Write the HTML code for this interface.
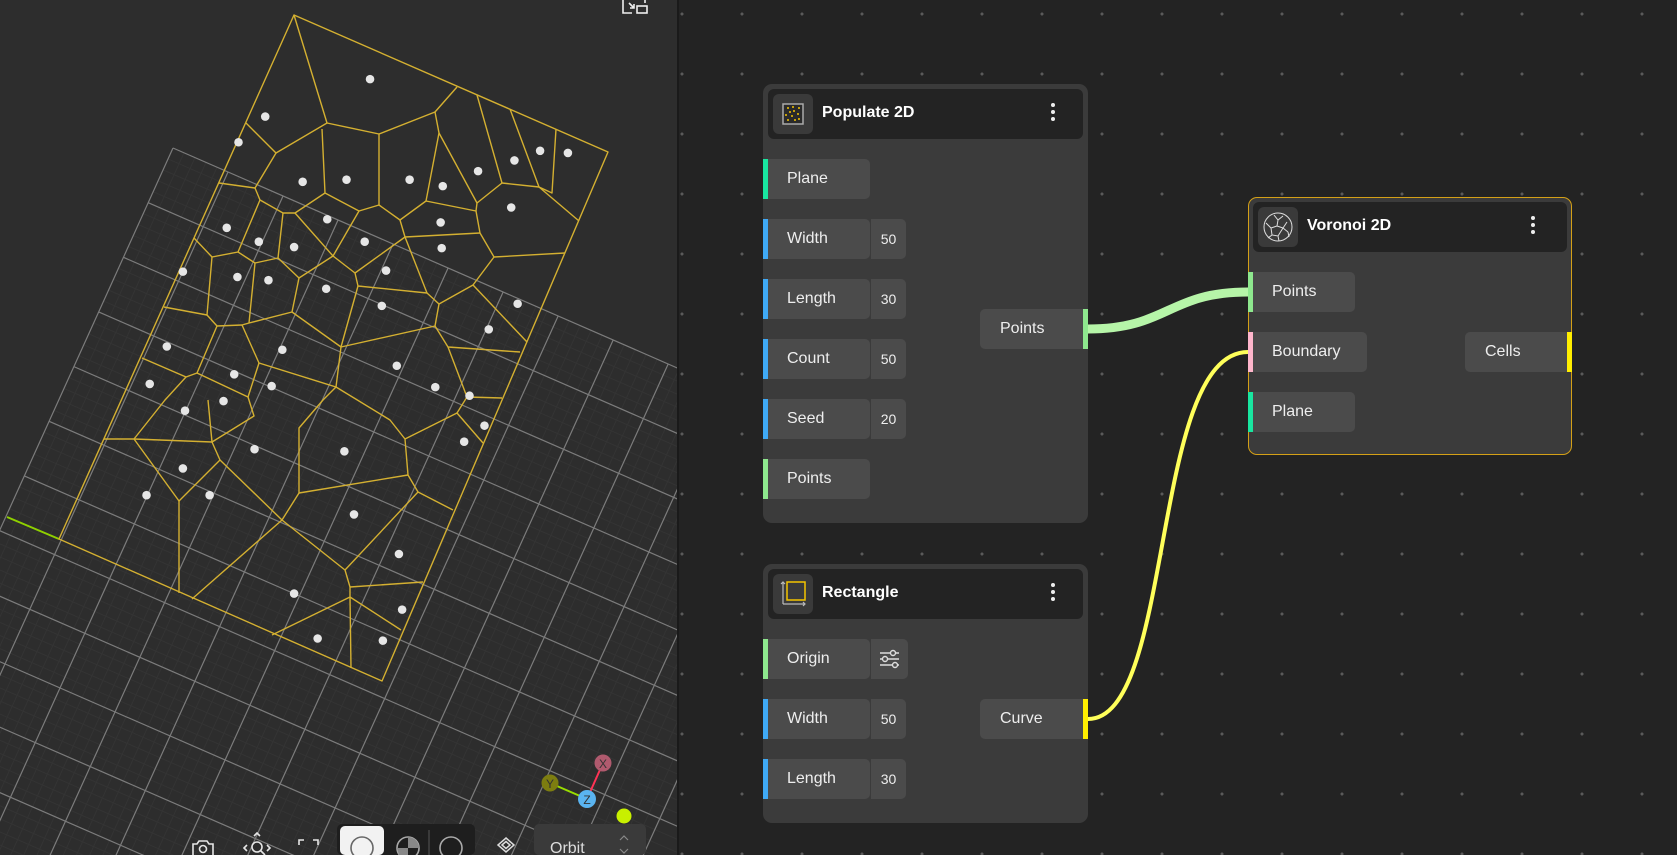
<!DOCTYPE html>
<html><head><meta charset="utf-8"><style>
*{margin:0;padding:0;box-sizing:border-box}
body{width:1677px;height:855px;overflow:hidden;background:#222;font-family:"Liberation Sans",sans-serif;position:relative}
#vp{position:absolute;left:0;top:0;width:677px;height:855px;background:#2d2d2d;overflow:hidden}
#div{position:absolute;left:677px;top:0;width:2px;height:855px;background:#1a1a1a}
#ed{position:absolute;left:679px;top:0;width:998px;height:855px;background:#232323;background-image:radial-gradient(#5a5a5a 1.4px,transparent 1.6px);background-size:60px 60px;background-position:-27px -16px}
.node{position:absolute;background:#3b3b3b;border-radius:9px}
.hd{position:absolute;left:5px;top:5px;right:5px;height:50px;background:#232323;border-radius:6px}
.ic{position:absolute;left:5px;top:5px;width:40px;height:40px;background:#3a3a3a;border-radius:6px}
.tt{position:absolute;left:54px;top:15px;color:#fff;font-weight:bold;font-size:16px}
.kb{position:absolute;right:28px;top:14px;width:4px}
.kb i{display:block;width:4px;height:4px;border-radius:50%;background:#eee;margin-bottom:3px}
.pt{position:absolute;height:40px;background:#4b4b4b;border-radius:0 5px 5px 0;color:#eee;font-size:16px;line-height:40px;padding-left:24px}
.pt.o{border-radius:5px 0 0 5px}
.bar{position:absolute;top:0;width:5px;height:40px}
.vl{position:absolute;height:40px;background:#4b4b4b;border-radius:0 5px 5px 0;color:#eee;font-size:14px;line-height:40px;text-align:center}
</style></head><body>
<div id="vp">
<svg width="677" height="855" style="position:absolute;left:0;top:0">
<g transform="matrix(0.917,0.4,-0.413,0.911,173,148)">
<g stroke="#343434" stroke-width="1" fill="none">
<path d="M12 0V1200M24 0V1200M36 0V1200M48 0V1200M72 0V1200M84 0V1200M96 0V1200M108 0V1200M132 0V1200M144 0V1200M156 0V1200M168 0V1200M192 0V1200M204 0V1200M216 0V1200M228 0V1200M252 0V1200M264 0V1200M276 0V1200M288 0V1200M312 0V1200M324 0V1200M336 0V1200M348 0V1200M372 0V1200M384 0V1200M396 0V1200M408 0V1200M432 0V1200M444 0V1200M456 0V1200M468 0V1200M492 0V1200M504 0V1200M516 0V1200M528 0V1200M552 0V1200M564 0V1200M576 0V1200M588 0V1200M612 0V1200M624 0V1200M636 0V1200M648 0V1200M672 0V1200M684 0V1200M696 0V1200M708 0V1200"/>
<path d="M0 12H1200M0 24H1200M0 36H1200M0 48H1200M0 72H1200M0 84H1200M0 96H1200M0 108H1200M0 132H1200M0 144H1200M0 156H1200M0 168H1200M0 192H1200M0 204H1200M0 216H1200M0 228H1200M0 252H1200M0 264H1200M0 276H1200M0 288H1200M0 312H1200M0 324H1200M0 336H1200M0 348H1200M0 372H1200M0 384H1200M0 396H1200M0 408H1200M0 432H1200M0 444H1200M0 456H1200M0 468H1200M0 492H1200M0 504H1200M0 516H1200M0 528H1200M0 552H1200M0 564H1200M0 576H1200M0 588H1200M0 612H1200M0 624H1200M0 636H1200M0 648H1200M0 672H1200M0 684H1200M0 696H1200M0 708H1200"/>
</g>
<g stroke="#7c7c7c" stroke-width="1.2" fill="none">
<path d="M0 0V1200M60 0V1200M120 0V1200M180 0V1200M240 0V1200M300 0V1200M360 0V1200M420 0V1200M480 0V1200M540 0V1200M600 0V1200M660 0V1200M720 0V1200"/>
<path d="M0 0H1200M0 60H1200M0 120H1200M0 180H1200M0 240H1200M0 300H1200M0 360H1200M0 420H1200M0 480H1200M0 540H1200M0 600H1200M0 660H1200M0 720H1200"/>
</g>
</g>
<line x1="7" y1="517" x2="59" y2="539" stroke="#8fd000" stroke-width="2"/>
<g fill="none" stroke="#d4b031" stroke-width="1.4" stroke-linejoin="round">
<polygon points="294,15 608,152 382,681 59,539"/>
<polyline points="294,15 327,123 379,134 435,112 457,87"/>
<polyline points="435,112 439,133 426,201 400,220 379,205 379,134"/>
<polyline points="477,95 502,183 539,187 579,221"/>
<polyline points="510,109 539,187 552,193 556,129"/>
<polyline points="439,133 477,203 502,183"/>
<polyline points="426,201 476,211 477,203"/>
<polyline points="476,211 480,233 494,257 565,253"/>
<polyline points="480,233 405,237 400,220"/>
<polyline points="327,123 276,153 246,123"/>
<polyline points="322,129 325,193 359,211 379,205"/>
<polyline points="276,153 255,188 219,183"/>
<polyline points="325,193 295,213 283,213 260,200 255,188"/>
<polyline points="359,211 333,256 295,213"/>
<polyline points="283,213 278,258 255,263 238,252 260,200"/>
<polyline points="238,252 212,257 194,238"/>
<polyline points="333,256 299,278 278,258"/>
<polyline points="333,256 355,273 405,237"/>
<polyline points="355,273 358,286 427,293 439,304 473,285 494,257"/>
<polyline points="405,237 427,293"/>
<polyline points="473,285 527,342"/>
<polyline points="212,257 207,315 164,307"/>
<polyline points="255,263 249,323 242,325 217,326 207,315"/>
<polyline points="249,323 292,312 299,278"/>
<polyline points="292,312 341,347 435,326 439,304"/>
<polyline points="358,286 341,347"/>
<polyline points="435,326 448,347 520,352"/>
<polyline points="217,326 197,373 186,377 142,358"/>
<polyline points="242,325 259,363 336,387 341,347"/>
<polyline points="197,373 248,397 259,363"/>
<polyline points="448,347 467,397 502,398"/>
<polyline points="336,387 390,420 405,439 408,475 418,492 453,510"/>
<polyline points="186,377 165,400 134,439 104,439"/>
<polyline points="248,397 254,416 212,442 134,439"/>
<polyline points="208,400 212,442 220,460 179,501 134,439"/>
<polyline points="179,501 179,593"/>
<polyline points="220,460 282,520 192,599"/>
<polyline points="282,520 345,570 350,587 350,597 272,635"/>
<polyline points="350,597 351,668"/>
<polyline points="350,597 401,630"/>
<polyline points="350,587 423,582"/>
<polyline points="345,570 418,492"/>
<polyline points="282,520 299,493 299,428 323,400 336,387"/>
<polyline points="299,493 408,475"/>
<polyline points="405,439 457,413 483,443"/>
<polyline points="457,413 467,397"/>
</g>
<g fill="#e6e6e6" transform="scale(1.0695)">
<circle cx="346" cy="74" r="4"/><circle cx="248" cy="109" r="4"/><circle cx="223" cy="133" r="4"/><circle cx="212" cy="213" r="4"/><circle cx="242" cy="226" r="4"/><circle cx="283" cy="170" r="4"/><circle cx="324" cy="168" r="4"/><circle cx="383" cy="168" r="4"/><circle cx="414" cy="174" r="4"/><circle cx="447" cy="160" r="4"/><circle cx="481" cy="150" r="4"/><circle cx="505" cy="141" r="4"/><circle cx="531" cy="143" r="4"/><circle cx="478" cy="194" r="4"/><circle cx="306" cy="205" r="4"/><circle cx="412" cy="208" r="4"/><circle cx="275" cy="231" r="4"/><circle cx="341" cy="226" r="4"/><circle cx="413" cy="232" r="4"/><circle cx="171" cy="254" r="4"/><circle cx="222" cy="259" r="4"/><circle cx="251" cy="262" r="4"/><circle cx="305" cy="270" r="4"/><circle cx="361" cy="253" r="4"/><circle cx="357" cy="286" r="4"/><circle cx="484" cy="284" r="4"/><circle cx="457" cy="308" r="4"/><circle cx="156" cy="324" r="4"/><circle cx="264" cy="327" r="4"/><circle cx="371" cy="342" r="4"/><circle cx="219" cy="350" r="4"/><circle cx="254" cy="361" r="4"/><circle cx="140" cy="359" r="4"/><circle cx="209" cy="375" r="4"/><circle cx="407" cy="362" r="4"/><circle cx="173" cy="384" r="4"/><circle cx="439" cy="370" r="4"/><circle cx="453" cy="398" r="4"/><circle cx="238" cy="420" r="4"/><circle cx="322" cy="422" r="4"/><circle cx="434" cy="413" r="4"/><circle cx="171" cy="438" r="4"/><circle cx="196" cy="463" r="4"/><circle cx="137" cy="463" r="4"/><circle cx="331" cy="481" r="4"/><circle cx="373" cy="518" r="4"/><circle cx="275" cy="555" r="4"/><circle cx="376" cy="570" r="4"/><circle cx="297" cy="597" r="4"/><circle cx="358" cy="599" r="4"/>
</g>
<g fill="none" stroke="#eee" stroke-width="1.6"><path d="M623 0V13H632M629 3L634 8M634 4V8H630"/><rect x="637" y="6" width="10" height="7"/><path d="M645 0V3"/></g>
<line x1="587" y1="799" x2="603" y2="763" stroke="#ff3355" stroke-width="2"/>
<line x1="587" y1="799" x2="550" y2="783" stroke="#99dd00" stroke-width="2"/>
<circle cx="603" cy="763" r="8.5" fill="#b05a6e"/><text x="603" y="768" fill="#333" font-size="12" text-anchor="middle">X</text>
<circle cx="550" cy="783" r="8.5" fill="#7d7d10"/><text x="550" y="788" fill="#333" font-size="12" text-anchor="middle">Y</text>
<circle cx="587" cy="799" r="9" fill="#5ab4f0"/><text x="587" y="804" fill="#333" font-size="12" text-anchor="middle">Z</text>
<circle cx="624" cy="816" r="7.5" fill="#c8f000"/>
<g fill="none" stroke="#e6e6e6" stroke-width="1.6">
<path d="M193 855V844h4l2-3h8l2 3h4V855"/><circle cx="203" cy="849" r="3.5"/>
<circle cx="257" cy="847" r="5"/><path d="M261 851l4 4M247 845l-3 3 3 3M267 845l3 3-3 3M254 836l3-3 3 3"/>
<path d="M299 845v-5h5M313 840h5v5"/>
</g>
<rect x="337" y="824" width="138" height="31" rx="5" fill="#1e1e1e"/>
<rect x="340" y="826" width="44" height="29" rx="5" fill="#f2f2f2"/>
<circle cx="362" cy="848" r="11" fill="none" stroke="#666" stroke-width="1.6"/>
<circle cx="408" cy="848" r="11" fill="none" stroke="#aaa" stroke-width="1.6"/><path d="M408 837a11 11 0 0 1 11 11H408zM397 848h11v7h-9z" fill="#888"/>
<line x1="429" y1="830" x2="429" y2="855" stroke="#555" stroke-width="1"/>
<circle cx="451" cy="848" r="11" fill="none" stroke="#aaa" stroke-width="1.6"/>
<path d="M506 838l8 7-8 7-8-7z M502 845l4-3.5 4 3.5-4 3.5z" fill="none" stroke="#ddd" stroke-width="1.5"/>
<rect x="534" y="824" width="112" height="31" rx="5" fill="#3a3a3a"/>
<text x="550" y="853" fill="#ddd" font-size="16">Orbit</text>
<path d="M620 840l4-4 4 4M620 849l4 4 4-4" fill="none" stroke="#888" stroke-width="1.2"/>
</svg>
</div>
<div id="div"></div>
<div id="ed"></div>

<svg width="1677" height="855" style="position:absolute;left:0;top:0;pointer-events:none">
<path d="M1088 329C1168 329 1168 292 1248 292" stroke="#b6f5a8" stroke-width="9" fill="none"/>
<path d="M1088 719C1175 719 1150 352 1248 352" stroke="#ffff5a" stroke-width="4" fill="none"/>
</svg>

<div class="node" style="left:763px;top:84px;width:325px;height:439px">
<div class="hd">
<div class="ic"><svg width="40" height="40"><rect x="10" y="10" width="20" height="20" fill="#2a2a2a" stroke="#aaa" stroke-width="1.5"/><g fill="#f5c400"><circle cx="15" cy="14" r="1"/><circle cx="20" cy="13" r="1"/><circle cx="26" cy="14" r="1"/><circle cx="17" cy="18" r="1"/><circle cx="21" cy="17" r="1"/><circle cx="25" cy="20" r="1"/><circle cx="13" cy="21" r="1"/><circle cx="19" cy="22" r="1"/><circle cx="15" cy="26" r="1"/><circle cx="22" cy="26" r="1"/><circle cx="26" cy="25" r="1"/></g></svg></div>
<div class="tt">Populate 2D</div><div class="kb"><i></i><i></i><i></i></div></div>
<div class="pt" style="left:0;top:75px;width:107px"><span class="bar" style="left:0;background:#19e6a0"></span>Plane</div>
<div class="pt" style="left:0;top:135px;width:107px"><span class="bar" style="left:0;background:#3fa9f5"></span>Width</div><div class="vl" style="left:108px;top:135px;width:35px">50</div>
<div class="pt" style="left:0;top:195px;width:107px"><span class="bar" style="left:0;background:#3fa9f5"></span>Length</div><div class="vl" style="left:108px;top:195px;width:35px">30</div>
<div class="pt" style="left:0;top:255px;width:107px"><span class="bar" style="left:0;background:#3fa9f5"></span>Count</div><div class="vl" style="left:108px;top:255px;width:35px">50</div>
<div class="pt" style="left:0;top:315px;width:107px"><span class="bar" style="left:0;background:#3fa9f5"></span>Seed</div><div class="vl" style="left:108px;top:315px;width:35px">20</div>
<div class="pt" style="left:0;top:375px;width:107px"><span class="bar" style="left:0;background:#8ee88e"></span>Points</div>
<div class="pt o" style="left:217px;top:225px;width:108px;padding-left:20px"><span class="bar" style="right:0;background:#8ee88e"></span>Points</div>
</div>

<div class="node" style="left:763px;top:564px;width:325px;height:259px">
<div class="hd">
<div class="ic"><svg width="40" height="40"><rect x="14" y="8" width="18" height="18" fill="none" stroke="#f5c400" stroke-width="1.5"/><path d="M10 8V30M8 10l2-2 2 2M10 30H32M30 28l2 2-2 2" stroke="#bbb" stroke-width="1.2" fill="none"/></svg></div>
<div class="tt">Rectangle</div><div class="kb"><i></i><i></i><i></i></div></div>
<div class="pt" style="left:0;top:75px;width:107px"><span class="bar" style="left:0;background:#8ee88e"></span>Origin</div>
<div class="vl" style="left:108px;top:75px;width:37px"><svg width="37" height="40"><g stroke="#ddd" stroke-width="1.4" fill="#4b4b4b"><path d="M9 14H28M9 20H28M9 26H28"/><circle cx="22" cy="14" r="2.5"/><circle cx="14" cy="20" r="2.5"/><circle cx="24" cy="26" r="2.5"/></g></svg></div>
<div class="pt" style="left:0;top:135px;width:107px"><span class="bar" style="left:0;background:#3fa9f5"></span>Width</div><div class="vl" style="left:108px;top:135px;width:35px">50</div>
<div class="pt" style="left:0;top:195px;width:107px"><span class="bar" style="left:0;background:#3fa9f5"></span>Length</div><div class="vl" style="left:108px;top:195px;width:35px">30</div>
<div class="pt o" style="left:217px;top:135px;width:108px;padding-left:20px"><span class="bar" style="right:0;background:#ffee00"></span>Curve</div>
</div>

<div class="node" style="left:1248px;top:197px;width:324px;height:258px;border:1px solid #d4a017">
<div class="hd" style="left:4px;top:4px;right:4px">
<div class="ic"><svg width="40" height="40"><g fill="none" stroke="#ddd" stroke-width="1"><circle cx="20" cy="20" r="14"/><path d="M16 8l4 5 5-4M20 13l-1 6 6 2 4-6M19 19l-6 2-5-5M13 21l1 7 6 1 5-8M14 28l-4 3M20 29l1 5M25 21l5 4M30 25l1 5"/></g></svg></div>
<div class="tt">Voronoi 2D</div><div class="kb" style="right:32px"><i></i><i></i><i></i></div></div>
<div class="pt" style="left:-1px;top:74px;width:107px"><span class="bar" style="left:0;background:#8ee88e"></span>Points</div>
<div class="pt" style="left:-1px;top:134px;width:119px"><span class="bar" style="left:0;background:#ffb6cc"></span>Boundary</div>
<div class="pt" style="left:-1px;top:194px;width:107px"><span class="bar" style="left:0;background:#19e6a0"></span>Plane</div>
<div class="pt o" style="left:216px;top:134px;width:107px;padding-left:20px"><span class="bar" style="right:0;background:#ffee00"></span>Cells</div>
</div>
</body></html>
